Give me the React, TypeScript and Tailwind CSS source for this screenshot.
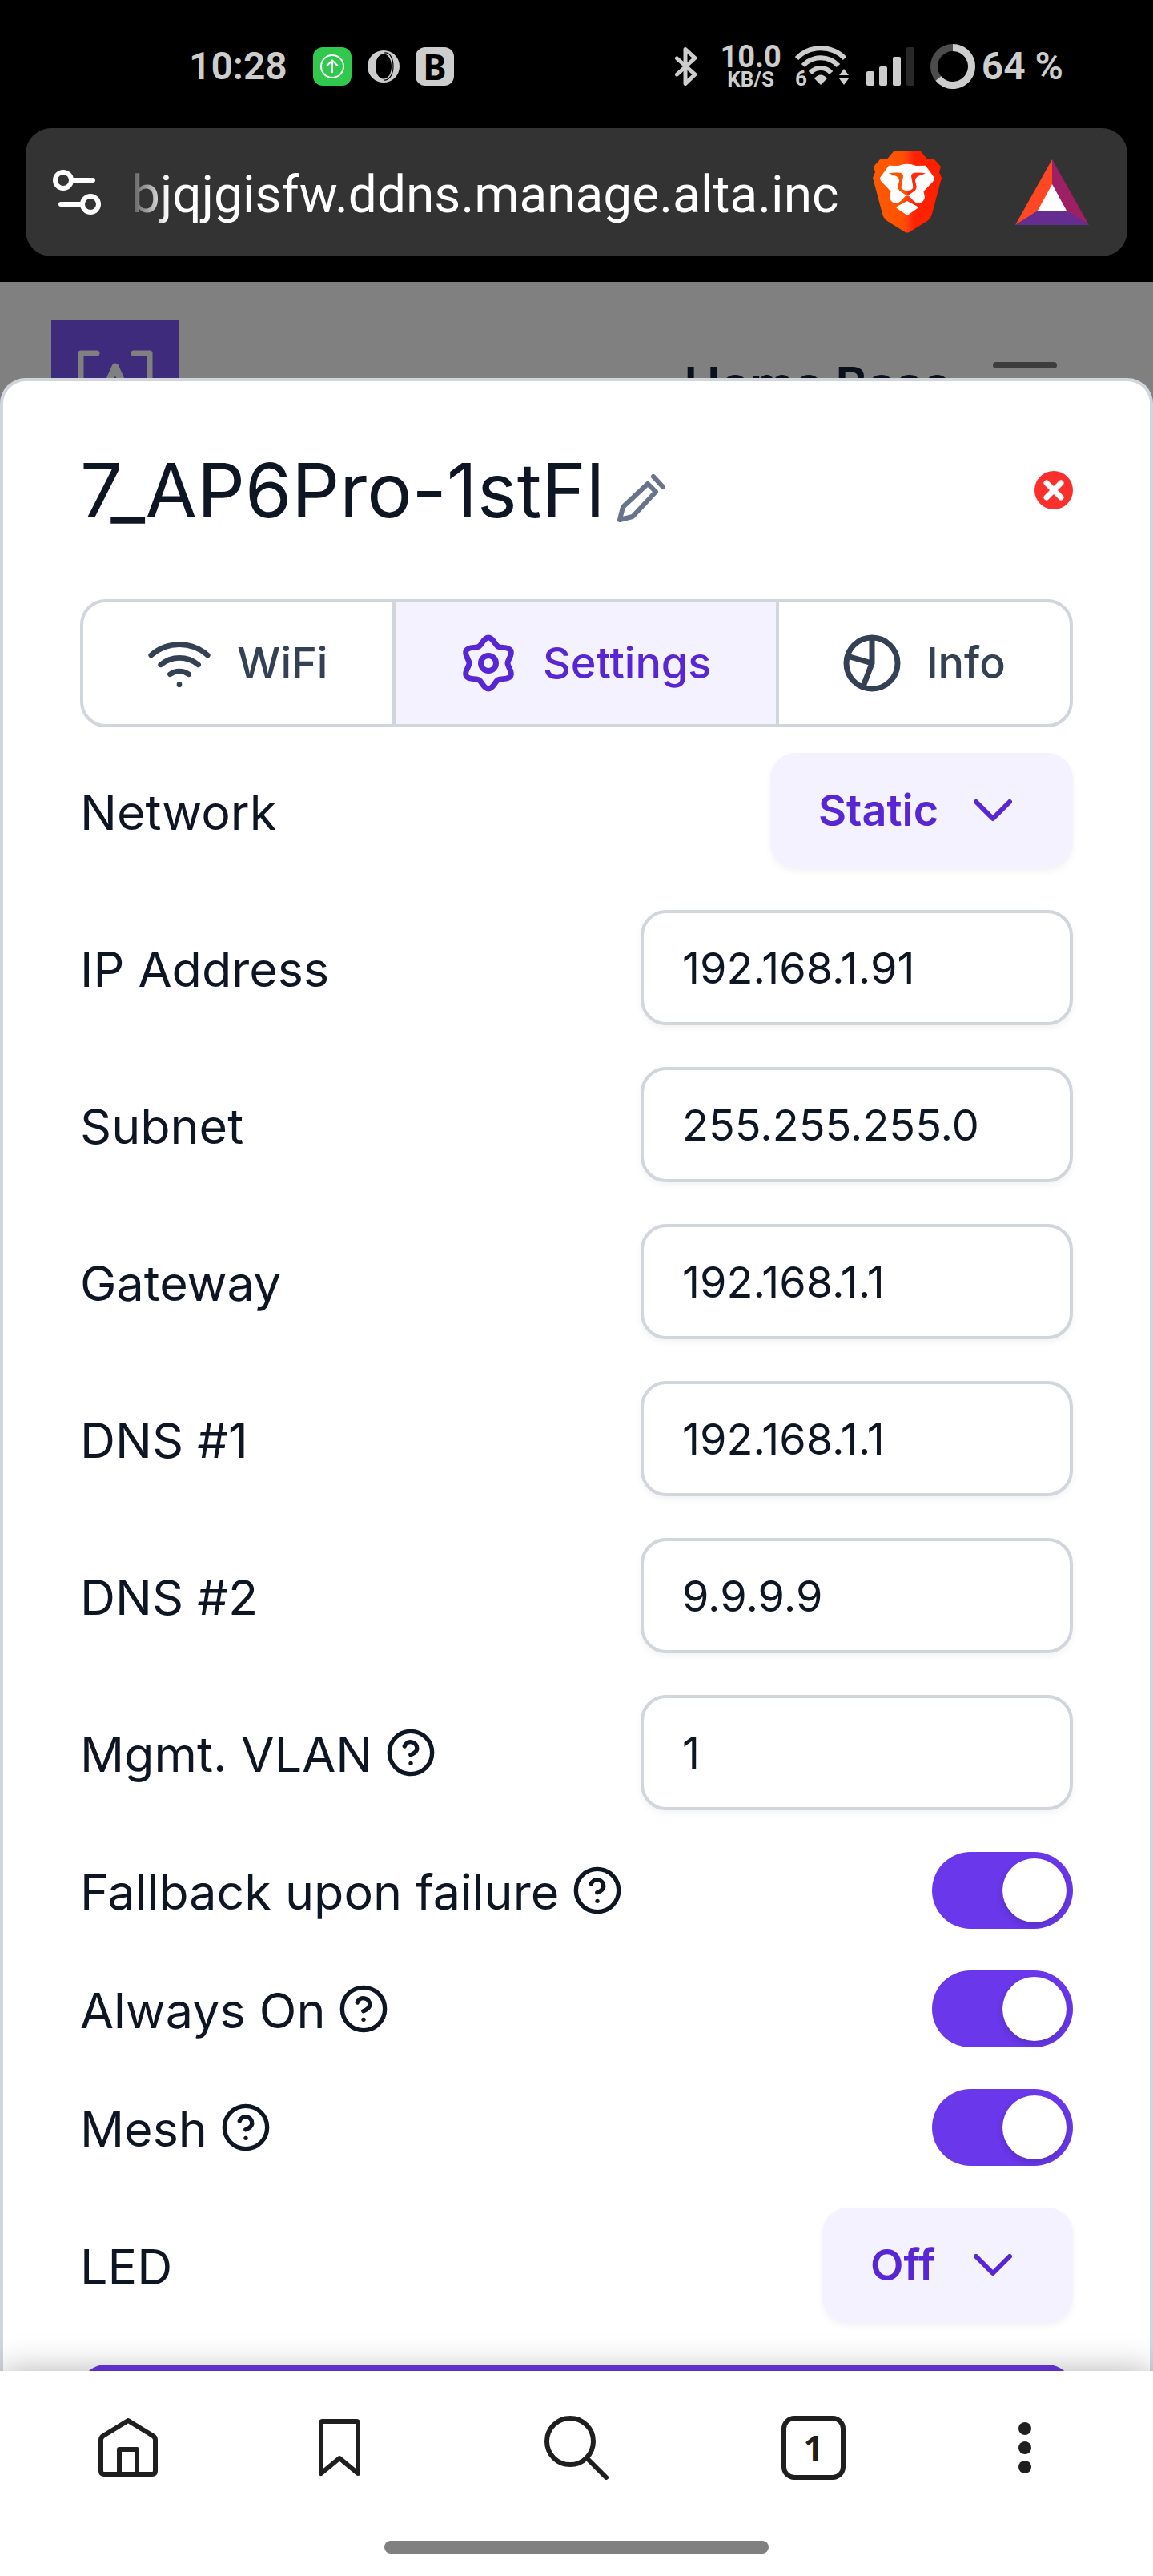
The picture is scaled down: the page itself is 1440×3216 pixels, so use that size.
import React, { useState } from 'react';
import { CircleHelp } from 'lucide-react';

const addressFields = [
    { id: 'ip', label: 'IP Address', value: '192.168.1.91' },
    { id: 'subnet', label: 'Subnet', value: '255.255.255.0' },
    { id: 'gateway', label: 'Gateway', value: '192.168.1.1' },
    { id: 'dns1', label: 'DNS #1', value: '192.168.1.1' },
    { id: 'dns2', label: 'DNS #2', value: '9.9.9.9' },
    { id: 'vlan', label: 'Mgmt. VLAN', value: '1', help: true }
];

const toggles = [
    { id: 'fallback', label: 'Fallback upon failure' },
    { id: 'always-on', label: 'Always On' },
    { id: 'mesh', label: 'Mesh' }
];

function StatusBar() {
    return (
        <div className="flex h-40 shrink-0 items-center justify-between pl-[236px] pr-28 pt-1.5 font-[Roboto,sans-serif] text-[#cdcdcd]">
            <div className="flex items-center gap-5">
                <span className="mr-3 text-5xl font-semibold">10:28</span>
                <svg width="48" height="48" viewBox="0 0 48 48" fill="none">
                    <rect width="48" height="48" rx="12" fill="#30c94e" />
                    <circle cx="24" cy="24" r="14" stroke="#fff" strokeWidth="2" />
                    <path d="M24 32V17M17 23.500l7-7 7 7" stroke="#fff" strokeWidth="2" />
                </svg>
                <svg width="40" height="40" viewBox="0 0 40 40">
                    <path
                        fillRule="evenodd"
                        d="M20 0a20 20 0 1 0 0 40 20 20 0 0 0 0-40ZM20 4.500c-6 0-10 7-10 15.500s4 15.500 10 15.500S30 28.500 30 20 26 4.500 20 4.500Z"
                        fill="#cdcdcd"
                    />
                    <path d="M21 3c7-1 11 7 11 17s-5 18-12 17" stroke="#000" strokeWidth="1.200" fill="none" />
                </svg>
                <span className="flex size-12 items-center justify-center rounded-xl bg-[#cdcdcd] font-['Noto_Sans',sans-serif] text-[44px] font-bold leading-none text-black">
                    B
                </span>
            </div>

            <div className="flex items-center">
                <svg className="mr-7" width="28" height="48" viewBox="0 0 28 48" fill="none" stroke="#cdcdcd" strokeWidth="5" strokeLinejoin="round" strokeLinecap="round">
                    <path d="M2.500 14 25 34 13 45.500V2.500L25 13.500 2.500 34" />
                </svg>
                <div className="mr-4 flex flex-col items-center font-bold">
                    <span className="text-[38px] leading-8">10.0</span>
                    <span className="text-[26px] leading-6">KB/S</span>
                </div>
                <svg className="mr-5" width="70" height="52" viewBox="0 0 70 52" fill="none" stroke="#cdcdcd">
                    <path d="M3 16C19-1 47-1 63 16" strokeWidth="6" />
                    <path d="M11 25c12-13 32-13 44 0" strokeWidth="6" />
                    <path d="M20 34c7-8 19-8 26 0" strokeWidth="6" />
                    <path d="M25 41c5-6 11-6 16 0l-8 8Z" fill="#cdcdcd" stroke="none" />
                    <path d="m56 37 6-8 6 8ZM56 41h12l-6 8Z" fill="#cdcdcd" stroke="none" />
                    <text x="1" y="50" fontSize="26" fontWeight="700" fill="#cdcdcd" stroke="none">6</text>
                </svg>
                <svg className="mr-5" width="60" height="48" viewBox="0 0 60 48" fill="#cdcdcd">
                    <rect x="0" y="30" width="10" height="18" rx="2" />
                    <rect x="16" y="24" width="10" height="24" rx="2" />
                    <rect x="33" y="12" width="10" height="36" rx="2" />
                    <rect x="50" y="0" width="10" height="48" rx="2" fill="#282828" />
                </svg>
                <svg className="mr-2" width="56" height="56" viewBox="0 0 56 56" fill="none" strokeWidth="9">
                    <circle cx="28" cy="28" r="23.500" stroke="#4c4c4c" />
                    <path d="M28 4.500a23.500 23.500 0 1 1-18.100 38.500" stroke="#cdcdcd" />
                </svg>
                <span className="text-5xl font-semibold">64 %</span>
            </div>
        </div>
    );
}

function BraveLogo() {
    const eye = 'M20 27.500Q27 26 34 26.700 38 27.500 38 31L35.500 45Q37 49 43 49V55.500Q41 54.500 34 49.500 31 47 31.500 43L33 37Q33 32 28 30.500Z';

    return (
        <svg width="86" height="102" viewBox="0 0 86 102">
            <defs>
                <linearGradient id="brave" x1="0" x2="86" y1="0" y2="0" gradientUnits="userSpaceOnUse">
                    <stop offset="0" stopColor="#ff5a00" />
                    <stop offset="0.440" stopColor="#ff5000" />
                    <stop offset="0.520" stopColor="#ff3a14" />
                    <stop offset="0.600" stopColor="#ff2200" />
                    <stop offset="1" stopColor="#ff1f00" />
                </linearGradient>
            </defs>
            <path
                d="M26 0h34l8 9.500 8-.5 9 10-2 7 3 7-12 45q-1 5-6 9L47 100q-4 3-8 0L18 87q-5-4-6-9L0 33l3-7-2-7L10 9l8 .5Z"
                fill="url(#brave)"
            />
            <path
                d="M20 17.700 32 18Q38 15.700 43 15.700T54 18L66 17.700 77 33Q77 37 72 41L63.500 50Q64 53 65 57 65 62 58 65 54 65 51 62L45 55.500H41L35 62Q32 65 28 65 21 62 21 57 22 53 22.500 50L14 41Q9 37 9 33Z"
                fill="#fff"
            />
            <path d={eye} fill="#ff5000" />
            <path d={eye} fill="#ff2a08" transform="translate(86 0) scale(-1 1)" />
            <path d="M43 62 56 69q1 1 0 2L43 80 30 71q-1-1 0-2Z" fill="#fff" />
        </svg>
    );
}

function AddressBar() {
    return (
        <div className="mx-8 mb-8 flex h-40 shrink-0 items-center rounded-[32px] bg-[#333333] pl-8 pr-12">
            <button aria-label="Site settings" className="mr-9">
                <svg width="64" height="60" viewBox="0 0 64 60" fill="none" stroke="#fff" strokeWidth="6" strokeLinecap="round">
                    <circle cx="15" cy="15" r="10" />
                    <path d="M27 15h25M12 45h24" />
                    <circle cx="49" cy="45" r="10" />
                </svg>
            </button>
            <div className="min-w-0 flex-1 whitespace-nowrap bg-linear-to-r from-white/20 to-white to-5% bg-clip-text pt-2 font-[Roboto,sans-serif] text-[64px] leading-[88px] text-transparent">
                bjqjgisfw.ddns.manage.alta.inc
            </div>
            <button aria-label="Shields" className="mr-[92px]">
                <BraveLogo />
            </button>
            <button aria-label="Rewards">
                <svg width="92" height="82" viewBox="0 0 92 82">
                    <path d="M46 0 0 82l28-17 18-33Z" fill="#ff4724" />
                    <path d="m46 0 46 82-28-17-18-33Z" fill="#9e1f63" />
                    <path d="M0 82h92L64 64H28Z" fill="#662d91" />
                    <path d="m46 31 18 33H28Z" fill="#fff" />
                </svg>
            </button>
        </div>
    );
}

function SiteHeader() {
    return (
        <div className="flex h-[120px] shrink-0 items-start overflow-hidden pl-16 pr-[120px] pt-12">
            <svg width="160" height="160" viewBox="0 0 160 160" fill="none" stroke="#808080" strokeWidth="7" strokeLinecap="round" strokeLinejoin="round">
                <rect width="160" height="160" fill="#3f2b7b" stroke="none" />
                <path d="M57 41H37v78h20M103 41h20v78h-20" />
                <path d="M58 108 80 58l22 50M66 92h28" strokeWidth="9" />
            </svg>
            <span className="ml-auto pt-10 text-[61px] font-semibold leading-[80px] text-[#0b111c]">Home Base</span>
            <svg className="ml-[52px] mt-[52px] shrink-0" width="80" height="56" viewBox="0 0 80 56" fill="#3d3d3d">
                <rect width="80" height="8" rx="4" />
                <rect y="24" width="80" height="8" rx="4" />
                <rect y="48" width="80" height="8" rx="4" />
            </svg>
        </div>
    );
}

function Tabs() {
    return (
        <div className="flex h-40 overflow-hidden rounded-[32px] border-4 border-gray-300 text-[54px] font-medium text-[#344054]">
            <button className="flex flex-auto items-center justify-center gap-8 border-r-4 border-gray-300">
                <svg width="80" height="80" viewBox="0 0 24 24" fill="none" stroke="currentColor" strokeWidth="2" strokeLinecap="round">
                    <path d="M1.420 9a16 16 0 0 1 21.160 0M5 12.550a11 11 0 0 1 14.080 0M8.530 16.110a6 6 0 0 1 6.950 0M12 20h.01" />
                </svg>
                WiFi
            </button>
            <button className="flex flex-auto items-center justify-center gap-8 border-r-4 border-gray-300 bg-[#f4f2fe] text-[#5826d3]">
                <svg width="72" height="72" viewBox="-36 -36 72 72" fill="none" stroke="currentColor" strokeWidth="7" strokeLinejoin="round">
                    <path d="M0-32C6-32 8-23.100 12-20.800S24.700-21.200 27.700-16 24-4.600 24 0 30.700 10.800 27.700 16 16 18.500 12 20.800 6 32 0 32-8 23.100-12 20.800-24.700 21.200-27.700 16-24 4.600-24 0-30.700-10.800-27.700-16-16-18.500-12-20.800-6-32 0-32Z" />
                    <circle r="9.500" />
                </svg>
                Settings
            </button>
            <button className="flex flex-auto items-center justify-center gap-8">
                <svg width="72" height="72" viewBox="-36 -36 72 72" fill="none" stroke="currentColor" strokeWidth="7">
                    <circle r="32" />
                    <path d="M0-32V0l-11 29M0 0l-31-9" />
                </svg>
                Info
            </button>
        </div>
    );
}

function Dropdown({ id, options, className }: { id: string; options: string[]; className: string }) {
    return (
        <div className="relative">
            <select
                id={id}
                className={`h-36 appearance-none rounded-[32px] bg-[#f4f2fe] pl-[60px] text-[54px] font-semibold text-[#5826d3] shadow-[0_4px_8px_rgba(16,24,40,0.05)] outline-none ${className}`}
            >
                {options.map((o) => (
                    <option key={o}>{o}</option>
                ))}
            </select>
            <svg className="pointer-events-none absolute right-[76px] top-[58px]" width="48" height="28" viewBox="0 0 48 28" fill="none" stroke="#5826d3" strokeWidth="6" strokeLinecap="round" strokeLinejoin="round">
                <path d="m3 3 21 21L45 3" />
            </svg>
        </div>
    );
}

function Row({ id, label, help, children }: { id: string; label: string; help?: boolean; children: React.ReactNode }) {
    return (
        <div className="flex items-center justify-between">
            <div className="flex items-center gap-4">
                <label htmlFor={id} className="pt-1">{label}</label>
                {help && <CircleHelp size={64} strokeWidth={2} />}
            </div>
            {children}
        </div>
    );
}

function BottomNav() {
    return (
        <nav className="relative z-10 shrink-0 bg-white pb-7 shadow-[0_0_40px_rgba(0,0,0,0.3)]">
            <div className="flex h-48 items-center justify-between px-[104px] text-[#1f1f1f]">
                <button aria-label="Home" className="flex w-28 justify-center">
                    <svg width="74" height="74" viewBox="0 0 74 74" fill="none" stroke="currentColor" strokeWidth="6" strokeLinejoin="round">
                        <path d="M37 3 6 22q-3 2-3 5v39q0 4 4 4h60q4 0 4-4V27q0-3-3-5Z" />
                        <path d="M26 70V39h22v31" />
                    </svg>
                </button>
                <button aria-label="Bookmarks" className="flex w-28 justify-center">
                    <svg width="52" height="72" viewBox="0 0 52 72" fill="none" stroke="currentColor" strokeWidth="6" strokeLinejoin="round">
                        <path d="M3 5q0-2 2-2h42q2 0 2 2v63L26 49 3 68Z" />
                    </svg>
                </button>
                <button aria-label="Search" className="flex w-44 justify-center">
                    <svg width="80" height="80" viewBox="0 0 80 80" fill="none" stroke="currentColor" strokeWidth="6" strokeLinecap="round">
                        <circle cx="32" cy="32" r="29" />
                        <path d="m53 53 24 24" />
                    </svg>
                </button>
                <button aria-label="Tabs" className="flex w-28 justify-center">
                    <span className="flex size-20 items-center justify-center rounded-2xl border-6 border-[#1f1f1f] font-['Noto_Sans',sans-serif] text-[44px] font-bold leading-none">
                        1
                    </span>
                </button>
                <button aria-label="Menu" className="flex w-28 justify-center">
                    <svg width="16" height="64" viewBox="0 0 16 64" fill="currentColor">
                        <circle cx="8" cy="8" r="8" />
                        <circle cx="8" cy="32" r="8" />
                        <circle cx="8" cy="56" r="8" />
                    </svg>
                </button>
            </div>
            <div className="mx-auto mt-5 h-4 w-1/3 rounded-full bg-[#808080]" />
        </nav>
    );
}

export default function App() {
    const [values, setValues] = useState<Record<string, string>>(
        Object.fromEntries(addressFields.map((f) => [f.id, f.value]))
    );

    return (
        <div className="flex h-screen flex-col overflow-hidden bg-black font-[Inter,sans-serif]">
            <StatusBar />
            <AddressBar />

            <main className="flex min-h-0 flex-1 flex-col overflow-hidden bg-[#808080]">
                <SiteHeader />

                {/* Device sheet */}
                <section className="min-h-0 flex-1 overflow-hidden rounded-t-[32px] border-x-4 border-t-4 border-gray-300 bg-white px-24 pt-20 text-[61px] leading-[72px] text-[#0f1623]">
                    <header className="mb-20 flex h-28 items-center">
                        <h1 className="text-[94px] leading-[112px]">7_AP6Pro-1stFl</h1>
                        <button aria-label="Rename" className="ml-4 mt-5">
                            <svg width="60" height="60" viewBox="0 0 60 60" fill="none" stroke="#677489" strokeWidth="6" strokeLinecap="round" strokeLinejoin="round">
                                <path d="M38 12 7 41 3 57l16-4 29-31ZM45 3l12 13" />
                            </svg>
                        </button>
                        <button aria-label="Close" className="ml-auto">
                            <svg width="48" height="48" viewBox="0 0 48 48" fill="none">
                                <circle cx="24" cy="24" r="24" fill="#fb302d" />
                                <path d="m15 15 18 18M33 15 15 33" stroke="#fff" strokeWidth="7" strokeLinecap="round" />
                            </svg>
                        </button>
                    </header>

                    <Tabs />

                    <div className="mt-8 flex flex-col gap-[52px]">
                        <Row id="network" label="Network">
                            <Dropdown id="network" options={['Static', 'DHCP']} className="w-[378px]" />
                        </Row>

                        {addressFields.map((f) => (
                            <Row key={f.id} id={f.id} label={f.label} help={f.help}>
                                <input
                                    id={f.id}
                                    type="text"
                                    value={values[f.id]}
                                    onChange={(e) => setValues({ ...values, [f.id]: e.target.value })}
                                    className="h-36 w-[540px] rounded-[32px] border-4 border-gray-300 bg-white px-12 text-[54px] shadow-[0_4px_8px_rgba(16,24,40,0.05)] outline-none"
                                />
                            </Row>
                        ))}

                        {toggles.map((t) => (
                            <Row key={t.id} id={t.id} label={t.label} help>
                                <input
                                    id={t.id}
                                    type="checkbox"
                                    role="switch"
                                    defaultChecked
                                    className="flex h-24 w-44 appearance-none items-center rounded-full bg-gray-300 p-2 before:size-20 before:rounded-full before:bg-white before:shadow-[0_4px_8px_rgba(16,24,40,0.2)] checked:justify-end checked:bg-[#6a37eb]"
                                />
                            </Row>
                        ))}

                        <Row id="led" label="LED">
                            <Dropdown id="led" options={['Off', 'On']} className="w-[313px]" />
                        </Row>

                        <button aria-label="Save" className="h-36 w-full rounded-[32px] bg-[#6a37eb]" />
                    </div>
                </section>
            </main>

            <BottomNav />
        </div>
    );
}
